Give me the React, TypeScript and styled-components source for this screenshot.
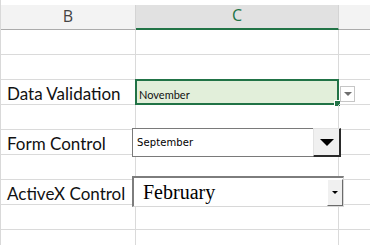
import React from "react";
import styled, { createGlobalStyle } from "styled-components";

const GlobalStyle = createGlobalStyle`
  html, body {
    margin: 0;
    padding: 0;
    background: #ffffff;
    overflow: hidden;
  }
`;

const Sheet = styled.div`
  display: grid;
  grid-template-columns: 135px 203px 32px;
  grid-template-rows: 30px repeat(9, 25px);
  width: 370px;
  height: 245px;
  overflow: hidden;
  font-family: Lato, "Open Sans", sans-serif;
  border-left: 1px solid #d9d9d9;
  box-sizing: border-box;
`;

const ColHeader = styled.div<{ $active?: boolean; $last?: boolean }>`
  display: flex;
  align-items: flex-end;
  justify-content: center;
  padding-bottom: 2px;
  box-sizing: border-box;
  margin-top: 5px;
  background: ${(p) => (p.$active ? "#e1e1e1" : "#f3f3f3")};
  color: ${(p) => (p.$active ? "#217346" : "#444444")};
  border-right: ${(p) => (p.$last ? "none" : "1px solid #d4d4d4")};
  border-bottom: ${(p) => (p.$active ? "2px solid #217346" : "1px solid #ababab")};
  font-family: "Open Sans", "Noto Sans", sans-serif;
  font-size: 16px;
  height: 25px;
`;

const Cell = styled.div`
  position: relative;
  box-sizing: border-box;
  border-right: 1px solid #dadada;
  border-bottom: 1px solid #dadada;
  display: flex;
  align-items: center;
  padding: 2px 0 0 6px;
  font-size: 17px;
  color: #111111;
  white-space: nowrap;
`;

const SelectedCell = styled(Cell)`
  background: #e2efda;
  border: 2px solid #217346;
  margin: -1px 0 0 -1px;
  padding: 4px 0 0 2px;
  font-size: 11px;
`;

const FillHandle = styled.span`
  position: absolute;
  right: -4px;
  bottom: -4px;
  width: 5px;
  height: 5px;
  background: #217346;
  border: 1px solid #ffffff;
`;

const ValidationArrow = styled.div`
  position: absolute;
  left: 1px;
  top: 6px;
  width: 15px;
  height: 16px;
  box-sizing: border-box;
  border: 1px solid #c6c6c6;
  background: #ffffff;
  display: flex;
  align-items: center;
  justify-content: center;
  z-index: 2;
`;

const Triangle = styled.span<{ $size: number; $color: string }>`
  width: 0;
  height: 0;
  border-left: ${(p) => p.$size}px solid transparent;
  border-right: ${(p) => p.$size}px solid transparent;
  border-top: ${(p) => p.$size}px solid ${(p) => p.$color};
`;

const FormCombo = styled.div`
  position: absolute;
  left: -4px;
  top: -2px;
  width: 209px;
  height: 29px;
  box-sizing: border-box;
  border: 1px solid #7a7a7a;
  background: #ffffff;
  display: flex;
  align-items: center;
  z-index: 2;
`;

const FormText = styled.span`
  flex: 1;
  padding-left: 4px;
  font-family: "DejaVu Sans", Tahoma, sans-serif;
  font-size: 10px;
  color: #000000;
  letter-spacing: 0.1px;
`;

const FormButton = styled.div`
  width: 28px;
  height: 29px;
  margin: -1px -1px -1px 0;
  box-sizing: border-box;
  background: #f0f0f0;
  border-top: 1px solid #e3e3e3;
  border-left: 1px solid #e3e3e3;
  border-right: 2px solid #2a2a2a;
  border-bottom: 2px solid #2a2a2a;
  display: flex;
  align-items: center;
  justify-content: center;
`;

const ActiveXCombo = styled.div`
  position: absolute;
  left: -4px;
  top: -4px;
  width: 212px;
  height: 31px;
  box-sizing: border-box;
  border-top: 2px solid #7d7d7d;
  border-left: 2px solid #7d7d7d;
  border-right: 1px solid #d8d8d8;
  border-bottom: 1px solid #d8d8d8;
  background: #ffffff;
  display: flex;
  align-items: center;
  z-index: 2;
`;

const ActiveXText = styled.span`
  flex: 1;
  padding-left: 9px;
  font-family: "Liberation Serif", "Times New Roman", serif;
  font-size: 20px;
  color: #000000;
`;

const ActiveXButton = styled.div`
  width: 16px;
  height: 27px;
  box-sizing: border-box;
  background: #f0f0f0;
  border-top: 1px solid #ffffff;
  border-left: 1px solid #ffffff;
  border-right: 1px solid #6b6b6b;
  border-bottom: 1px solid #6b6b6b;
  display: flex;
  align-items: center;
  justify-content: center;
`;

const rows = ["", "", "Data Validation", "", "Form Control", "", "ActiveX Control", "", ""];

export default function App() {
  return (
    <>
      <GlobalStyle />
      <Sheet>
        <ColHeader>B</ColHeader>
        <ColHeader $active>C</ColHeader>
        <ColHeader $last />
        {rows.map((label, i) => (
          <React.Fragment key={i}>
            <Cell>{label}</Cell>
            {i === 2 ? (
              <SelectedCell>
                November
                <FillHandle />
              </SelectedCell>
            ) : (
              <Cell>
                {i === 4 && (
                  <FormCombo>
                    <FormText>September</FormText>
                    <FormButton>
                      <Triangle $size={7} $color="#000000" />
                    </FormButton>
                  </FormCombo>
                )}
                {i === 6 && (
                  <ActiveXCombo>
                    <ActiveXText>February</ActiveXText>
                    <ActiveXButton>
                      <Triangle $size={3} $color="#000000" />
                    </ActiveXButton>
                  </ActiveXCombo>
                )}
              </Cell>
            )}
            <Cell>
              {i === 2 && (
                <ValidationArrow>
                  <Triangle $size={4} $color="#6e6e6e" />
                </ValidationArrow>
              )}
            </Cell>
          </React.Fragment>
        ))}
      </Sheet>
    </>
  );
}
